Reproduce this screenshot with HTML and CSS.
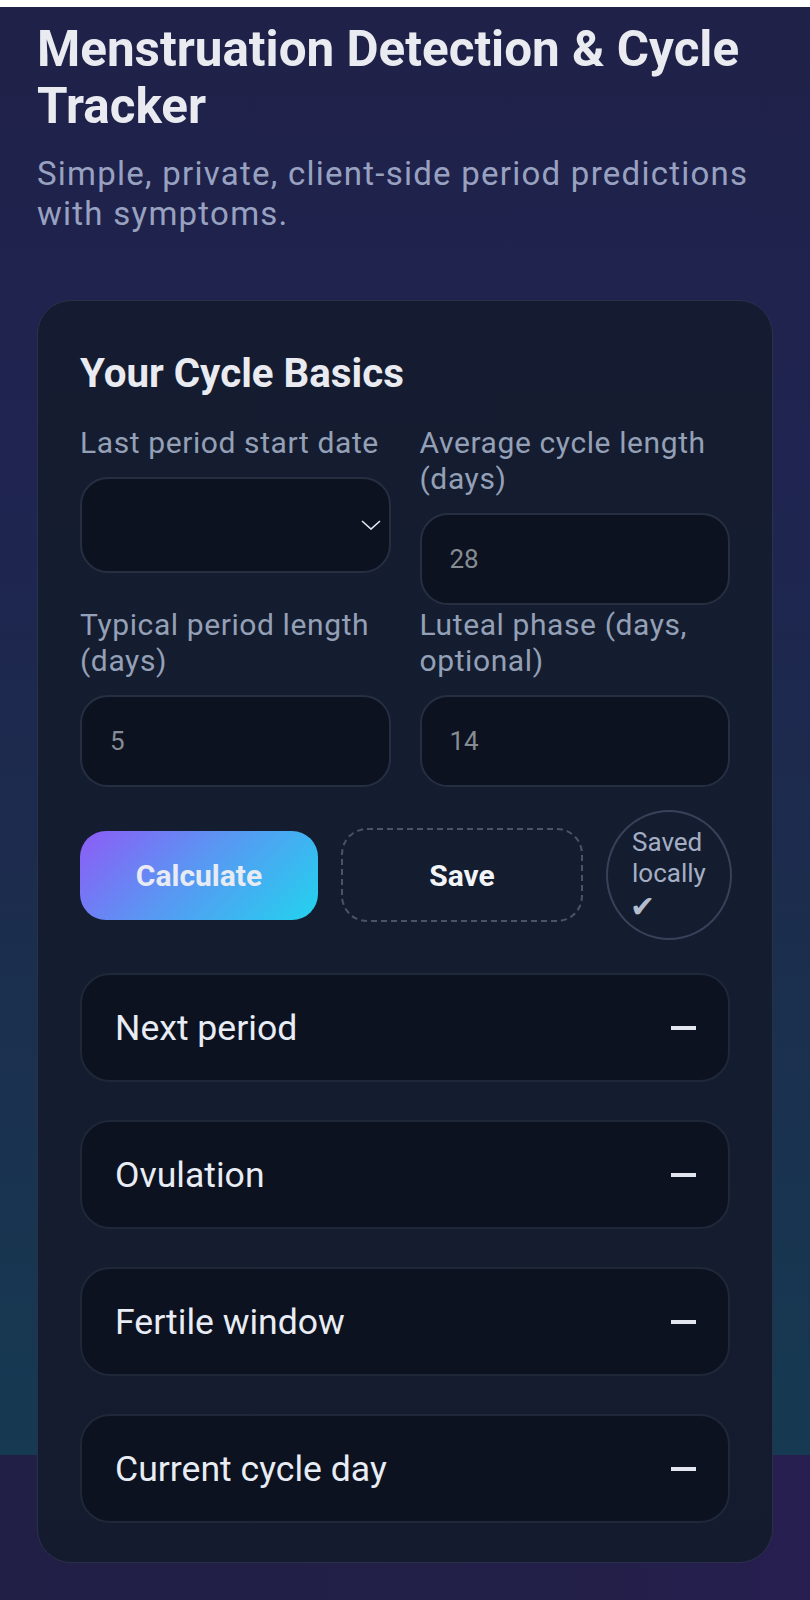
FILE: index.html
```html
<!DOCTYPE html>
<html lang="en">
<head>
<meta charset="utf-8">
<title>Menstruation Detection &amp; Cycle Tracker</title>
<link rel="stylesheet" href="styles.css">
</head>
<body>
  <header class="hero">
    <h1 class="hero-title">Menstruation Detection &amp; Cycle Tracker</h1>
    <p class="hero-sub">Simple, private, client-side period predictions with symptoms.</p>
  </header>

  <main class="card">
    <h2 class="card-title">Your Cycle Basics</h2>

    <div class="fields">
      <label class="field">
        <span class="field-label">Last period start date</span>
        <span class="field-input date-input">
          <svg class="chevron" width="20" height="10" viewBox="0 0 20 10" aria-hidden="true"><path d="M1 1 L10 9 L19 1" fill="none" stroke="#e6e9f0" stroke-width="1.6"/></svg>
        </span>
      </label>
      <label class="field">
        <span class="field-label">Average cycle length (days)</span>
        <input class="field-input" type="text" placeholder="28">
      </label>
      <label class="field">
        <span class="field-label">Typical period length (days)</span>
        <input class="field-input" type="text" placeholder="5">
      </label>
      <label class="field">
        <span class="field-label">Luteal phase (days, optional)</span>
        <input class="field-input" type="text" placeholder="14">
      </label>
    </div>

    <div class="actions">
      <button class="btn btn-primary" type="button">Calculate</button>
      <button class="btn btn-ghost" type="button">Save</button>
      <div class="saved-badge"><span class="badge-text">Saved locally</span><span class="check">✔</span></div>
    </div>

    <div class="results">
      <div class="result-row"><span class="result-name">Next period</span><span class="minus"></span></div>
      <div class="result-row"><span class="result-name">Ovulation</span><span class="minus"></span></div>
      <div class="result-row"><span class="result-name">Fertile window</span><span class="minus"></span></div>
      <div class="result-row"><span class="result-name">Current cycle day</span><span class="minus"></span></div>
    </div>
  </main>
</body>
</html>
```

FILE: styles.css
```css
* { box-sizing: border-box; }

html {
  background: #221f47;
}

body {
  margin: 0;
  padding: 21px 37px 40px;
  font-family: Roboto, "Liberation Sans", Arial, sans-serif;
  color: #e8ebf2;
  background:
    linear-gradient(#ffffff, #ffffff) 0 0 / 100% 7px no-repeat,
    linear-gradient(180deg, #1f2148 0%, #1f2450 30%, #1c2c4d 60%, #163a52 100%) 0 7px / 100% 1448px no-repeat,
    linear-gradient(90deg, #211f46 0%, #221f48 70%, #271f50 100%);
  min-height: 1600px;
}

.hero-title {
  margin: 0;
  font-size: 49.4px;
  line-height: 57px;
  font-weight: 700;
  color: #e9ebf1;
}

.hero-sub {
  margin: 19px 0 0;
  font-size: 33px;
  line-height: 40px;
  letter-spacing: 1.25px;
  color: #98a2c0;
}

.card {
  margin-top: 66px;
  border: 1.5px solid #283149;
  border-radius: 34px;
  background: linear-gradient(180deg, #151c31 0%, #141d2f 60%, #151b2e 100%);
  padding: 49px 42px 39px;
}

.card-title {
  margin: 0;
  font-size: 40.3px;
  line-height: 48px;
  font-weight: 700;
  color: #e9ebf1;
}

.fields {
  margin-top: 27px;
  display: grid;
  grid-template-columns: 1fr 1fr;
  column-gap: 29px;
  row-gap: 2px;
  align-items: start;
}

.field {
  display: flex;
  flex-direction: column;
  gap: 16px;
}

.field-label {
  font-size: 30px;
  line-height: 36px;
  letter-spacing: 0.6px;
  color: #94a0b6;
}

.field-input {
  display: block;
  width: 100%;
  height: 92px;
  margin: 0;
  padding: 0 28px;
  border: 2px solid #262f42;
  border-radius: 28px;
  background: #0c121f;
  font-family: Roboto, "Liberation Sans", Arial, sans-serif;
  font-size: 26px;
  color: #e6e9f0;
  outline: none;
}

.field-input::placeholder {
  color: #868b94;
}

.date-input {
  height: 96px;
  display: flex;
  align-items: center;
  justify-content: flex-end;
  padding-right: 8px;
}

.chevron { display: block; }

.actions {
  margin-top: 23px;
  display: flex;
  align-items: center;
  gap: 23px;
  height: 130px;
}

.btn {
  font-family: Roboto, "Liberation Sans", Arial, sans-serif;
  font-weight: 700;
  font-size: 30px;
  cursor: pointer;
}

.btn-primary {
  flex: 0 0 238px;
  height: 89px;
  border: 0;
  border-radius: 26px;
  color: #e8ebf3;
  background: linear-gradient(135deg, #8d5cf6 0%, #5b95f3 45%, #22d3ee 100%);
}

.btn-ghost {
  flex: 0 0 242px;
  height: 94px;
  border: 2px dashed #4a5468;
  border-radius: 26px;
  color: #f2f4f8;
  background: transparent;
}

.saved-badge {
  flex: 0 0 126px;
  width: 126px;
  height: 130px;
  border: 2px solid #37415a;
  border-radius: 50%;
  padding: 2px 10px 0 24px;
  display: flex;
  flex-direction: column;
  justify-content: center;
  align-items: flex-start;
  font-size: 26px;
  line-height: 31px;
  color: #a4aec4;
}

.badge-text {
  width: 80px;
}

.check {
  font-family: "DejaVu Sans", sans-serif;
  font-size: 30px;
  line-height: 36px;
  margin-left: -2px;
  color: #b4bccd;
}

.results {
  margin-top: 33px;
  display: flex;
  flex-direction: column;
  gap: 38px;
}

.result-row {
  height: 109px;
  display: flex;
  align-items: center;
  justify-content: space-between;
  padding: 0 32px 0 33px;
  border: 2px solid #1f2839;
  border-radius: 30px;
  background: #0c121f;
}

.result-name {
  font-size: 35.6px;
  color: #e8ecf4;
}

.minus {
  width: 25px;
  height: 4px;
  background: #e3e6ee;
}
```
